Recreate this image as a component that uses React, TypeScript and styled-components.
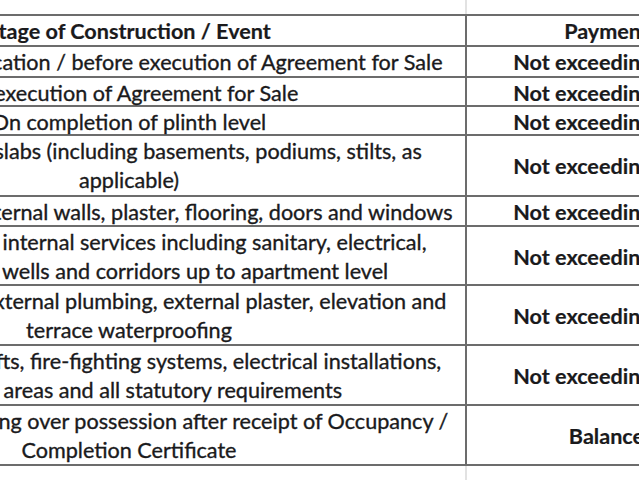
import React from "react";
import styled, { createGlobalStyle } from "styled-components";

const GlobalStyle = createGlobalStyle`
  html, body {
    margin: 0;
    padding: 0;
    background: #ffffff;
  }
  body {
    font-family: Lato, "Liberation Sans", sans-serif;
    color: #1a1a1c;
  }
`;

const Viewport = styled.div`
  width: 639px;
  height: 480px;
  overflow: hidden;
  box-sizing: border-box;
  padding-top: 14px;
  background: linear-gradient(
    to right,
    transparent 465px,
    #e2e2e2 465px,
    #e2e2e2 467px,
    transparent 467px
  );
`;

const Sheet = styled.div`
  margin-left: -207px;
  width: 953px;
  border-top: 2px solid #6c6c6c;
  background: #ffffff;
`;

const Row = styled.div<{ $h: number }>`
  display: grid;
  grid-template-columns: 674px 279px;
  height: ${(p) => p.$h}px;
  box-sizing: border-box;
  border-bottom: 2px solid #6c6c6c;
`;

const StageCell = styled.div<{ $bold?: boolean }>`
  display: flex;
  flex-direction: column;
  align-items: center;
  justify-content: center;
  border-right: 2px solid #6c6c6c;
  font-size: 21.6px;
  line-height: 29px;
  font-weight: ${(p) => (p.$bold ? 700 : 400)};
  -webkit-text-stroke: ${(p) => (p.$bold ? "0.2px" : "0.35px")} #1a1a1c;
  text-align: center;
  padding-top: 1px;
`;

const PayCell = styled.div`
  display: flex;
  align-items: center;
  justify-content: center;
  font-size: 21.6px;
  line-height: 29px;
  font-weight: 700;
  -webkit-text-stroke: 0.2px #1a1a1c;
  white-space: nowrap;
  padding-top: 1px;
`;

const Line = styled.span`
  display: block;
  white-space: nowrap;
`;

type Item = { h: number; stage: string[]; pay: string; head?: boolean };

const rows: Item[] = [
  { h: 31, stage: ["Stage of Construction / Event"], pay: "Payment", head: true },
  { h: 31, stage: ["On booking / application / before execution of Agreement for Sale"], pay: "Not exceeding 10%" },
  { h: 29, stage: ["On execution of Agreement for Sale"], pay: "Not exceeding 30%" },
  { h: 29, stage: ["On completion of plinth level"], pay: "Not exceeding 45%" },
  {
    h: 61,
    stage: ["On casting of all slabs (including basements, podiums, stilts, as", "applicable)"],
    pay: "Not exceeding 70%",
  },
  { h: 30, stage: ["On completion of internal walls, plaster, flooring, doors and windows"], pay: "Not exceeding 75%" },
  {
    h: 59,
    stage: [
      "On completion of internal services including sanitary, electrical,",
      "staircases, lift wells and corridors up to apartment level",
    ],
    pay: "Not exceeding 80%",
  },
  {
    h: 60,
    stage: ["On completion of external plumbing, external plaster, elevation and", "terrace waterproofing"],
    pay: "Not exceeding 85%",
  },
  {
    h: 60,
    stage: [
      "On installation of lifts, fire-fighting systems, electrical installations,",
      "common areas and all statutory requirements",
    ],
    pay: "Not exceeding 95%",
  },
  {
    h: 60,
    stage: ["At the time of handing over possession after receipt of Occupancy /", "Completion Certificate"],
    pay: "Balance",
  },
];

export default function App() {
  return (
    <>
      <GlobalStyle />
      <Viewport>
        <Sheet>
          {rows.map((r, i) => (
            <Row key={i} $h={r.h}>
              <StageCell $bold={r.head}>
                {r.stage.map((s, j) => (
                  <Line key={j}>{s}</Line>
                ))}
              </StageCell>
              <PayCell>{r.pay}</PayCell>
            </Row>
          ))}
        </Sheet>
      </Viewport>
    </>
  );
}
